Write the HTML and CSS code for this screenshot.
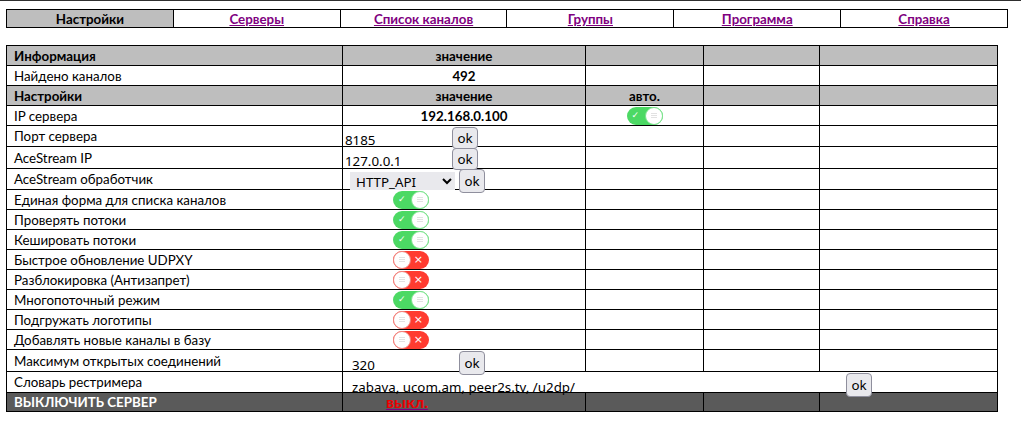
FILE: index.html
```html
<!DOCTYPE html>
<html lang="ru">
<head>
    <title>Настройки</title>
    <meta charset="UTF-8" />
    <link rel="stylesheet" href="styles.css">
</head>
<body>
    <div class="topline"></div>

    <table class="menu">
        <tr>
            <td class="current">Настройки</td>
            <td><a href="#">Серверы</a></td>
            <td><a href="#">Список каналов</a></td>
            <td><a href="#">Группы</a></td>
            <td><a href="#">Программа</a></td>
            <td><a href="#">Справка</a></td>
        </tr>
    </table>

    <table class="settings">
        <colgroup>
            <col class="c-name">
            <col class="c-value">
            <col class="c-auto">
            <col class="c-x1">
            <col class="c-x2">
        </colgroup>
        <tr class="head">
            <td>Информация</td>
            <td class="center">значение</td>
            <td></td><td></td><td></td>
        </tr>
        <tr>
            <td>Найдено каналов</td>
            <td class="center bold">492</td>
            <td></td><td></td><td></td>
        </tr>
        <tr class="head">
            <td>Настройки</td>
            <td class="center">значение</td>
            <td class="center">авто.</td>
            <td></td><td></td>
        </tr>
        <tr>
            <td>IP сервера</td>
            <td class="center bold">192.168.0.100</td>
            <td class="center"><span class="toggle on"><span class="mark">&#10003;</span><span class="knob"></span></span></td>
            <td></td><td></td>
        </tr>
        <tr class="row-21">
            <td>Порт сервера</td>
            <td class="form">
                <div class="field">
                    <input class="plain" type="text" value="8185">
                    <button>ok</button>
                </div>
            </td>
            <td></td><td></td><td></td>
        </tr>
        <tr class="row-22">
            <td>AceStream IP</td>
            <td class="form">
                <div class="field">
                    <input class="plain" type="text" value="127.0.0.1">
                    <button>ok</button>
                </div>
            </td>
            <td></td><td></td><td></td>
        </tr>
        <tr class="row-21">
            <td>AceStream обработчик</td>
            <td class="form">
                <div class="field picker">
                    <select>
                        <option>HTTP_API</option>
                    </select>
                    <button>ok</button>
                </div>
            </td>
            <td></td><td></td><td></td>
        </tr>
        <tr>
            <td>Единая форма для списка каналов</td>
            <td class="switch"><span class="toggle on"><span class="mark">&#10003;</span><span class="knob"></span></span></td>
            <td></td><td></td><td></td>
        </tr>
        <tr>
            <td>Проверять потоки</td>
            <td class="switch"><span class="toggle on"><span class="mark">&#10003;</span><span class="knob"></span></span></td>
            <td></td><td></td><td></td>
        </tr>
        <tr>
            <td>Кешировать потоки</td>
            <td class="switch"><span class="toggle on"><span class="mark">&#10003;</span><span class="knob"></span></span></td>
            <td></td><td></td><td></td>
        </tr>
        <tr>
            <td>Быстрое обновление UDPXY</td>
            <td class="switch"><span class="toggle off"><span class="knob"></span><span class="mark">&#215;</span></span></td>
            <td></td><td></td><td></td>
        </tr>
        <tr>
            <td>Разблокировка (Антизапрет)</td>
            <td class="switch"><span class="toggle off"><span class="knob"></span><span class="mark">&#215;</span></span></td>
            <td></td><td></td><td></td>
        </tr>
        <tr>
            <td>Многопоточный режим</td>
            <td class="switch"><span class="toggle on"><span class="mark">&#10003;</span><span class="knob"></span></span></td>
            <td></td><td></td><td></td>
        </tr>
        <tr>
            <td>Подгружать логотипы</td>
            <td class="switch"><span class="toggle off"><span class="knob"></span><span class="mark">&#215;</span></span></td>
            <td></td><td></td><td></td>
        </tr>
        <tr>
            <td>Добавлять новые каналы в базу</td>
            <td class="switch"><span class="toggle off"><span class="knob"></span><span class="mark">&#215;</span></span></td>
            <td></td><td></td><td></td>
        </tr>
        <tr class="row-22">
            <td>Максимум открытых соединений</td>
            <td class="form">
                <div class="field indent">
                    <input class="plain" type="text" value="320">
                    <button>ok</button>
                </div>
            </td>
            <td></td><td></td><td></td>
        </tr>
        <tr class="row-21">
            <td>Словарь рестримера</td>
            <td class="form" colspan="4">
                <div class="field indent">
                    <input class="plain wide" type="text" value="zabava, ucom.am, peer2s.tv, /u2dp/">
                    <button>ok</button>
                </div>
            </td>
        </tr>
        <tr class="off-row">
            <td>ВЫКЛЮЧИТЬ СЕРВЕР</td>
            <td class="stop"><a href="#"><span>выкл.</span></a></td>
            <td></td><td></td><td></td>
        </tr>
    </table>
</body>
</html>
```

FILE: styles.css
```css
body {
    margin: 0;
    padding: 0 6px;
    font-family: Lato, "Liberation Sans", sans-serif;
    font-size: 13.33px;
    color: #000;
    background: #fff;
}

.topline {
    height: 1px;
    margin: 0 -6px;
    background: #2e2e2e;
}

/* top menu */
.menu {
    width: 1002px;
    margin-top: 8px;
    border-collapse: collapse;
    table-layout: fixed;
}

.menu td {
    height: 17px;
    padding: 0;
    border: 1px solid #000;
    text-align: center;
    font-weight: bold;
    line-height: 16px;
}

.menu td.current {
    background: #bebebe;
}

.menu a {
    color: #800080;
}

/* settings table */
.settings {
    width: 991px;
    margin-top: 17px;
    border-collapse: collapse;
    table-layout: fixed;
}

.c-name { width: 336px; }
.c-value { width: 243px; }
.c-auto { width: 118px; }
.c-x1 { width: 116px; }
.c-x2 { width: 178px; }

.settings td {
    height: 19px;
    padding: 0 0 0 7px;
    border: 1px solid #000;
    white-space: nowrap;
    vertical-align: middle;
    line-height: 16px;
}

.settings tr.head td { height: 19px; }
.settings tr.row-21 td { height: 20px; }
.settings tr.row-22 td { height: 21px; }

.settings .head td {
    background: #bebebe;
    font-weight: bold;
}

.settings .center {
    text-align: center;
    padding-left: 0;
}

.bold {
    font-weight: bold;
}

/* inline forms */
.settings td.form {
    padding: 0;
    vertical-align: top;
}

.field {
    display: flex;
    align-items: flex-start;
    height: 19px;
    padding-left: 1px;
}

.field.picker {
    padding-left: 7px;
}

.field.indent {
    padding-left: 8px;
}

.plain {
    width: 106px;
    height: 20px;
    margin-top: 4px;
    padding: 0 1px;
    border: none;
    outline: none;
    background: transparent;
    font-family: "Noto Sans", "Open Sans", sans-serif;
    font-size: 13.33px;
    line-height: 20px;
    color: #000;
}

.field.indent .plain {
    margin-top: 5px;
}

.plain.wide {
    width: 493px;
    margin-top: -1px;
}

select {
    width: 105px;
    height: 18px;
    margin-top: 3px;
    padding: 0 0 0 2px;
    border: none;
    border-radius: 0;
    background: #e9e9ed;
    font-family: "Noto Sans", "Open Sans", sans-serif;
    font-size: 13.33px;
    color: #000;
}

button {
    position: relative;
    width: 26px;
    height: 22px;
    margin: 1px 0 0 0;
    padding: 0;
    border: 1px solid #8f8f9d;
    border-radius: 4px;
    background: #e9e9ed;
    font-family: "Noto Sans", "Open Sans", sans-serif;
    font-size: 13.33px;
    color: #000;
}

.field.picker button {
    height: 24px;
    margin-left: 4px;
    margin-top: 0;
}

.field.indent button {
    height: 24px;
}

/* switches */
.settings td.switch {
    padding-left: 50px;
}

.toggle {
    display: inline-flex;
    align-items: center;
    justify-content: space-between;
    width: 36px;
    height: 18px;
    border-radius: 9px;
    vertical-align: middle;
    box-sizing: border-box;
}

.toggle.on {
    background: #4cd964;
    padding-left: 5px;
}

.toggle.off {
    background: #ff3b30;
    padding-right: 6px;
}

.toggle .mark {
    color: #fff;
    font-family: "DejaVu Sans", sans-serif;
    font-size: 9px;
    line-height: 9px;
}

.toggle.off .mark {
    font-size: 11px;
}

.knob {
    display: flex;
    align-items: center;
    justify-content: center;
    width: 18px;
    height: 18px;
    border-radius: 50%;
    background: #fff;
    box-sizing: border-box;
}

.on .knob { border: 1px solid #7de38e; }
.off .knob { border: 1px solid #f0857f; }

.knob::before {
    content: "";
    width: 6px;
    height: 3px;
    border-top: 1px solid #e2e2e2;
    border-bottom: 1px solid #e2e2e2;
    background: linear-gradient(#fff 1px, #e2e2e2 1px, #e2e2e2 2px, #fff 2px);
}

/* last row */
.settings .off-row td {
    height: 18px;
    background: #5a5a5a;
    color: #fff;
    font-weight: bold;
}

.settings td.stop {
    padding-left: 43px;
    font-size: 16px;
}

.stop a {
    color: #800080;
}

.stop a span {
    color: #ee0000;
}
```
